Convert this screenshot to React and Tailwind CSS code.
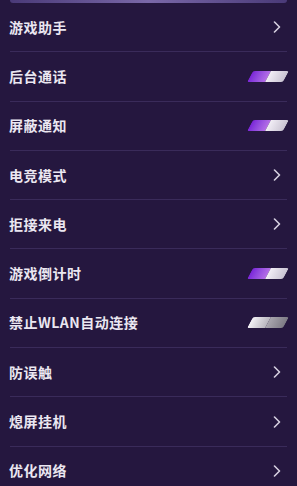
import React from 'react';

const items = [
    { label: '游戏助手', type: 'link' },
    { label: '后台通话', type: 'toggle', on: true },
    { label: '屏蔽通知', type: 'toggle', on: true },
    { label: '电竞模式', type: 'link' },
    { label: '拒接来电', type: 'link' },
    { label: '游戏倒计时', type: 'toggle', on: true },
    { label: '禁止WLAN自动连接', type: 'toggle', on: false },
    { label: '防误触', type: 'link' },
    { label: '熄屏挂机', type: 'link' },
    { label: '优化网络', type: 'link' },
];

const Chevron = () => (
    <svg width="8" height="12" viewBox="0 0 8 12" className="mr-[6px]">
        <polyline points="1.5,1 6.5,6 1.5,11" fill="none" stroke="#d6d0e0" strokeWidth="1.6" strokeLinecap="round" strokeLinejoin="round" />
    </svg>
);

const Toggle = ({ on }) => (
    <div className="flex h-[11px] w-[36px] -skew-x-[28deg] overflow-hidden rounded-[2px] mr-[1px]">
        {on ? (
            <>
                <div className="flex-1 bg-gradient-to-r from-[#7a22d8] to-[#b46ee6]" />
                <div className="flex-1 bg-gradient-to-r from-[#f2eef6] to-[#c9c3d2]" />
            </>
        ) : (
            <>
                <div className="flex-1 bg-gradient-to-r from-[#f4f2f6] to-[#b9b6be]" />
                <div className="flex-1 bg-gradient-to-r from-[#a9a6ae] to-[#7d7a84]" />
            </>
        )}
    </div>
);

export default function App() {
    return (
        <div className="w-[297px] h-[486px] overflow-hidden bg-[#25173f]" style={{ fontFamily: '"Noto Sans CJK SC", "Noto Sans", sans-serif' }}>
            <div className="mx-[10px] h-[3px] rounded-b-[3px] bg-gradient-to-r from-[#4a3a78] via-[#7a68a8] to-[#4a3a78]" />
            <div className="px-[10px]">
                {items.map((item, i) => (
                    <div
                        key={i}
                        className="flex h-[49.3px] items-center justify-between border-b border-[#3a2b5a]"
                    >
                        <span className="text-[14px] font-semibold text-[#ebe7f1] -ml-px tracking-[0.5px]">{item.label}</span>
                        {item.type === 'link' ? <Chevron /> : <Toggle on={item.on} />}
                    </div>
                ))}
            </div>
        </div>
    );
}
